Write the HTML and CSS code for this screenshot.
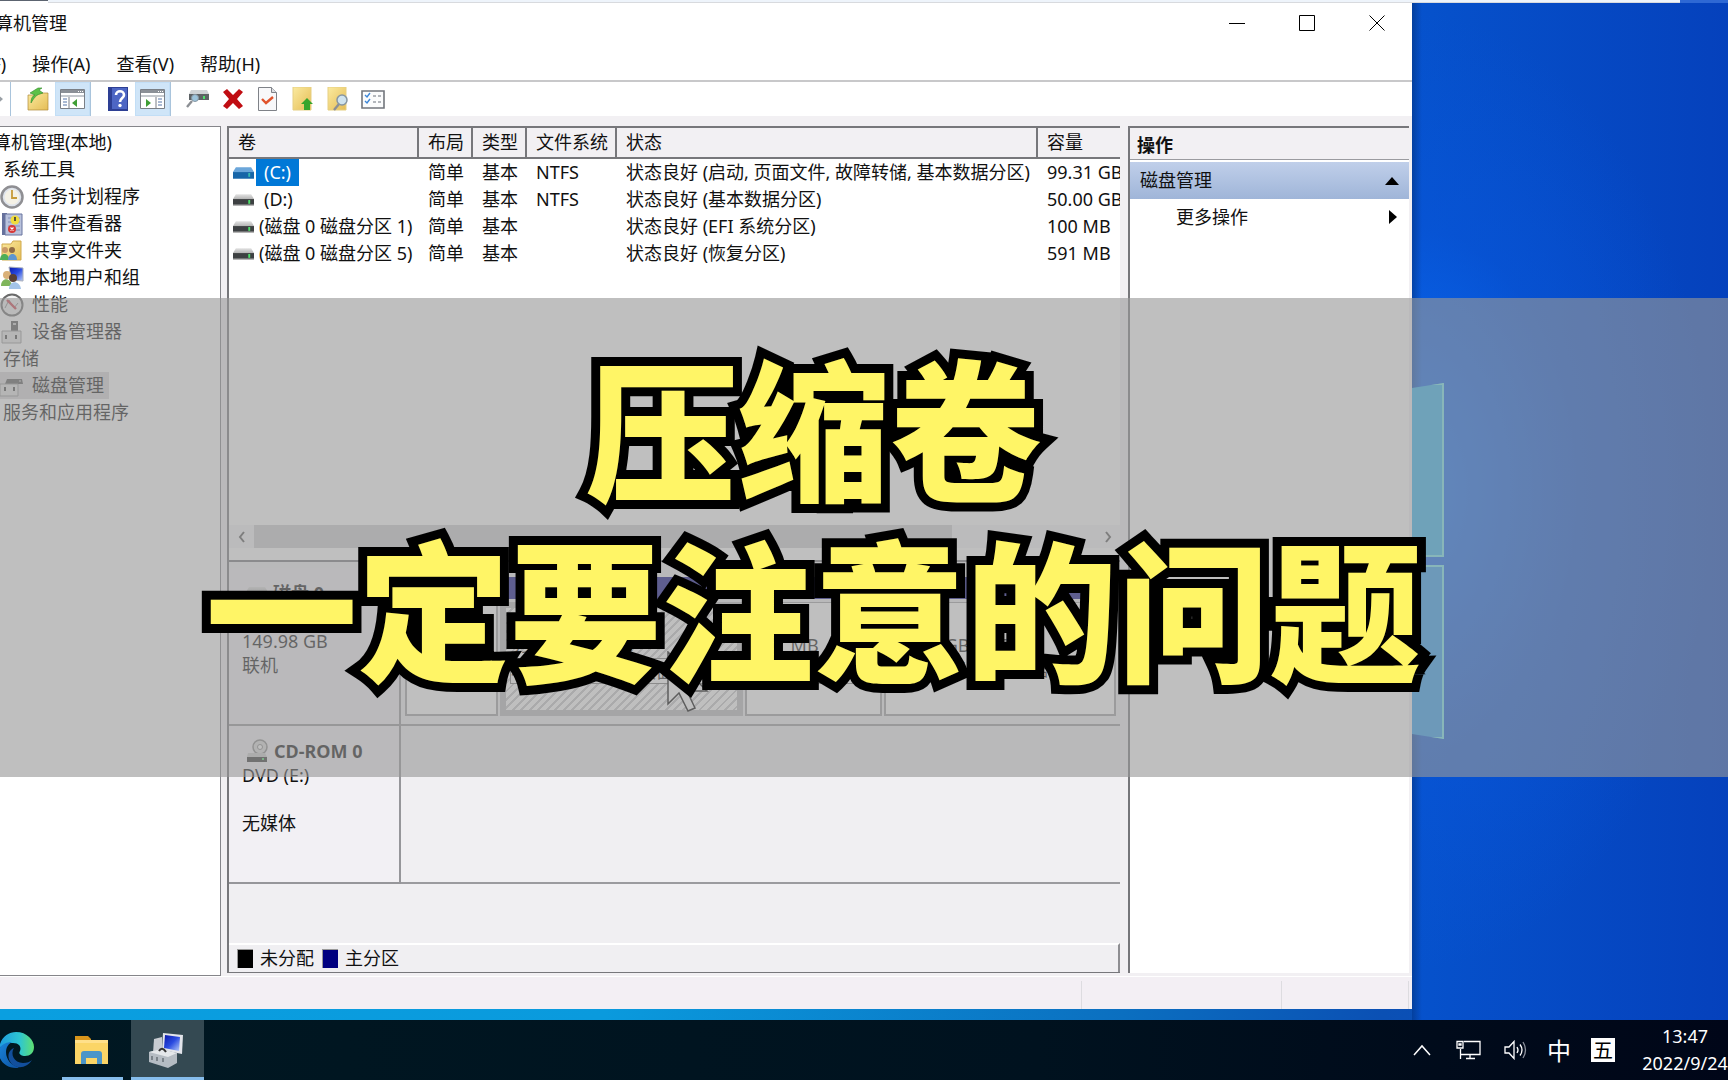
FILE: index.html
```html
<!DOCTYPE html>
<html lang="zh-CN">
<head>
<meta charset="utf-8">
<title>计算机管理</title>
<link rel="stylesheet" href="styles.css">
</head>
<body>
<svg width="0" height="0" class="defs" aria-hidden="true">
  <defs>
    <linearGradient id="gDrive" x1="0" y1="0" x2="0" y2="1"><stop offset="0" stop-color="#e3e3e3"/><stop offset="1" stop-color="#b4b4b4"/></linearGradient>
    <linearGradient id="gFolder" x1="0" y1="0" x2="1" y2="1"><stop offset="0" stop-color="#fbeaa0"/><stop offset="1" stop-color="#e5bd55"/></linearGradient>
    <linearGradient id="gScreen" x1="0" y1="0" x2="1" y2="1"><stop offset="0" stop-color="#0a18a8"/><stop offset=".5" stop-color="#2a4be0"/><stop offset="1" stop-color="#b8cdf8"/></linearGradient>
    <linearGradient id="gEdgeA" x1="0" y1="0" x2="1" y2="0"><stop offset="0" stop-color="#1c9be0"/><stop offset=".6" stop-color="#2fc6d0"/><stop offset="1" stop-color="#5fe070"/></linearGradient>
    <linearGradient id="gEdgeB" x1="0" y1="0" x2="1" y2="1"><stop offset="0" stop-color="#1a86dc"/><stop offset="1" stop-color="#0c4f9e"/></linearGradient>
    <symbol id="drive" viewBox="0 0 22 12"><path d="M3 0h16l3 5H0z" fill="url(#gDrive)"/><path d="M0 5h22v6H0z" fill="#3d4042"/><path d="M0 11h22v1H0z" fill="#9a9a9a"/><path d="M16 6h2v4h-2z" fill="#4ee06a"/></symbol>
    <symbol id="driveSel" viewBox="0 0 22 12"><path d="M3 0h16l3 5H0z" fill="#6ba6da"/><path d="M0 5h22v7H0z" fill="#1765a8"/><path d="M16 6h2v4h-2z" fill="#36b9b0"/></symbol>
  </defs>
</svg>
<div class="top-strip"><span class="strip-dark"></span><span class="strip-light"></span></div>
<div class="desktop">
  <main class="window">
    <header class="titlebar">
      <h1>计算机管理</h1>
      <div class="win-buttons">
        <button type="button" aria-label="最小化"><svg width="16" height="16" viewBox="0 0 16 16"><path d="M0 8.500h16" stroke="#000" fill="none"/></svg></button>
        <button type="button" aria-label="最大化"><svg width="16" height="16" viewBox="0 0 16 16"><path d="M.5.5h15v15H.5z" stroke="#000" fill="none"/></svg></button>
        <button type="button" aria-label="关闭"><svg width="16" height="16" viewBox="0 0 16 16"><path d="M.5.500l15 15M15.500.500l-15 15" stroke="#000" fill="none"/></svg></button>
      </div>
    </header>
    <nav class="menubar">
      <button type="button">文件(F)</button>
      <button type="button">操作(A)</button>
      <button type="button">查看(V)</button>
      <button type="button">帮助(H)</button>
    </nav>
    <div class="toolbar">
      <button type="button" aria-label="后退"><svg width="22" height="22" viewBox="0 0 22 22"><path d="M1 11l8-7v4h11v6H9v4z" fill="#9aa0a6"/></svg></button>
      <button type="button" aria-label="前进"><svg width="22" height="22" viewBox="0 0 22 22"><path d="M21 11l-8-7v4H2v6h11v4z" fill="#9aa0a6"/></svg></button>
      <span class="sep"></span>
      <button type="button" aria-label="上移"><svg width="22" height="24" viewBox="0 0 22 24"><path d="M1 8h7l2-2h11v17H1z" fill="url(#gFolder)" stroke="#b08a3a" stroke-width=".7"/><path d="M4 16c0-4 1-7 4-8L3 6l8-5 4 0-3 2 4 3-3 1c-4 1-6 4-9 9z" fill="#5cc148" stroke="#2f8a28" stroke-width=".6"/></svg></button>
      <button type="button" class="on" aria-label="显示控制台树"><svg width="25" height="20" viewBox="0 0 25 20"><path d="M.5.500h24v19H.5z" fill="#fff" stroke="#7a7f86"/><path d="M1 1h23v3H1z" fill="#8b9097"/><path d="M1 6h23v2H1z" fill="#c5c9ce"/><path d="M18 2h1v1h-1zM20 2h1v1h-1zM22 2h1v1h-1z" fill="#fff"/><path d="M9 8v11" stroke="#7a7f86"/><path d="M3 10h4M3 13h4M3 16h4" stroke="#5574a8"/><path d="M17 10v8l-5-4z" fill="#3f9e35"/></svg></button>
      <span class="sep"></span>
      <button type="button" aria-label="帮助"><svg width="20" height="24" viewBox="0 0 20 24"><path d="M0 0h20v24H0z" fill="#2d3f94"/><path d="M4 1h15v21H4z" fill="#4d66c4"/><path d="M8 8c0-5 8-5 8 0 0 3-4 3-4 7" stroke="#fff" stroke-width="2.600" fill="none"/><circle cx="12" cy="18.500" r="1.700" fill="#fff"/></svg></button>
      <button type="button" class="on" aria-label="显示操作窗格"><svg width="25" height="20" viewBox="0 0 25 20"><path d="M.5.500h24v19H.5z" fill="#fff" stroke="#7a7f86"/><path d="M1 1h23v3H1z" fill="#8b9097"/><path d="M1 6h23v2H1z" fill="#c5c9ce"/><path d="M18 2h1v1h-1zM20 2h1v1h-1zM22 2h1v1h-1z" fill="#fff"/><path d="M16 8v11" stroke="#7a7f86"/><path d="M18 10h4M18 13h4M18 16h4" stroke="#5574a8"/><path d="M6 10v8l5-4z" fill="#3f9e35"/></svg></button>
      <span class="sep"></span>
      <button type="button" aria-label="磁盘"><svg width="24" height="20" viewBox="0 0 24 20"><path d="M5 1h16l2 4H3z" fill="#cfd3d6"/><path d="M3 5h20v6H3z" fill="#5d6265"/><path d="M17 7h2v3h-2z" fill="#4ee06a"/><circle cx="9" cy="9" r="3.500" fill="#9cc4dc" stroke="#8796a2"/><path d="M6 12l-5 6" stroke="#8c8f94" stroke-width="2.400"/></svg></button>
      <button type="button" aria-label="删除"><svg width="22" height="22" viewBox="0 0 22 22"><path d="M1 4l4-3 6 6 6-6 4 3-6 7 6 7-4 3-6-6-6 6-4-3 6-7z" fill="#c00d12"/></svg></button>
      <button type="button" aria-label="属性"><svg width="19" height="24" viewBox="0 0 19 24"><path d="M.5.500h13l5 5v18H.5z" fill="#f8f8fa" stroke="#7f8288"/><path d="M13.500.500v5h5" fill="#dcdee2" stroke="#7f8288"/><path d="M4 12l4 4 7-6" stroke="#e0532c" stroke-width="2.400" fill="none"/></svg></button>
      <button type="button" aria-label="打开"><svg width="22" height="24" viewBox="0 0 22 24"><path d="M1 0h18v23H1z" fill="url(#gFolder)" stroke="#e6cf82"/><path d="M15 11l6 6h-3v6h-6v-6H9z" fill="#35a52c"/></svg></button>
      <button type="button" aria-label="查找"><svg width="22" height="24" viewBox="0 0 22 24"><path d="M1 0h18v23H1z" fill="url(#gFolder)" stroke="#e6cf82"/><path d="M12 17l-5 6" stroke="#8c8f94" stroke-width="2.400"/><circle cx="15" cy="13" r="5" fill="#cfe3ee" stroke="#8796a2" stroke-width="1.500"/></svg></button>
      <button type="button" aria-label="列表"><svg width="24" height="19" viewBox="0 0 24 19"><path d="M1 1h22v17H1z" fill="#fafbfc" stroke="#72767c" stroke-width="1.600"/><path d="M4 5l2 2 3-4M4 11l2 2 3-4" stroke="#3c86d8" stroke-width="1.400" fill="none"/><path d="M12 6h3M17 6h3M12 12h3M17 12h3" stroke="#9aa0a6" stroke-width="1.500"/></svg></button>
    </div>
    <div class="panes">
      <aside class="tree">
        <ul>
          <li class="root">计算机管理(本地)</li>
          <li class="group">系统工具</li>
          <li class="leaf"><svg width="24" height="24" viewBox="0 0 24 24"><circle cx="12" cy="12" r="10.500" fill="#dfe4ec" stroke="#8f8f93" stroke-width="2.500"/><circle cx="12" cy="12" r="7.500" fill="#f4f1e6"/><path d="M12 5v8h5" stroke="#c79b3a" stroke-width="1.800" fill="none"/></svg>任务计划程序</li>
          <li class="leaf"><svg width="24" height="24" viewBox="0 0 24 24"><path d="M2 1h5v22H2z" fill="#66719c"/><path d="M5 2h17v21H5z" fill="#b9c2dc" stroke="#69749f"/><path d="M8 6h12M8 10h12M8 14h12M8 18h12" stroke="#8490b8"/><circle cx="15" cy="8" r="4.500" fill="#f0dc3c"/><path d="M15 5v4" stroke="#333" stroke-width="1.600"/><circle cx="12" cy="17" r="4" fill="#d83838"/><path d="M10.500 15.500l3 3m0-3l-3 3" stroke="#fff" stroke-width="1.200"/></svg>事件查看器</li>
          <li class="leaf"><svg width="24" height="24" viewBox="0 0 24 24"><path d="M2 5h9l2-3h8v19H2z" fill="url(#gFolder)" stroke="#d0a94c"/><circle cx="5" cy="11" r="3" fill="#c99866"/><circle cx="12" cy="11" r="3" fill="#8f6a44"/><path d="M0 21c0-8 9-8 9 0z" fill="#4fae58"/><path d="M8 21c0-8 9-8 9 0z" fill="#5f95d0"/></svg>共享文件夹</li>
          <li class="leaf"><svg width="24" height="24" viewBox="0 0 24 24"><path d="M9 1l14 1v13l-12-1z" fill="url(#gScreen)" stroke="#a8aebb"/><circle cx="7" cy="9" r="4" fill="#d9b078"/><circle cx="13" cy="12" r="4" fill="#5a4034"/><path d="M1 20c0-9 10-9 11 0z" fill="#7fb55c"/><path d="M9 23c0-9 11-9 12 0z" fill="#a4c4e8"/></svg>本地用户和组</li>
          <li class="leaf"><svg width="24" height="24" viewBox="0 0 24 24"><circle cx="12" cy="12" r="10.500" fill="#f2f2f2" stroke="#6a6a6a" stroke-width="2"/><path d="M5 15l4-8 5 8 4-5" stroke="#8a8a8a" fill="none"/><path d="M7 7l9 9" stroke="#d0404c" stroke-width="2.400"/></svg>性能</li>
          <li class="leaf"><svg width="24" height="24" viewBox="0 0 24 24"><path d="M11 1h7v10h-7z" fill="#555"/><path d="M13 3h3v2h-3z" fill="#ccc"/><path d="M2 11h19v12H2z" fill="#e6e6e6" stroke="#999"/><path d="M5 15h2v4H5zM15 15h2v4h-2z" fill="#444"/></svg>设备管理器</li>
          <li class="group">存储</li>
          <li class="leaf selected"><svg width="24" height="24" viewBox="0 0 24 24"><path d="M7 5h15l1 5H5z" fill="#5a5a5a"/><path d="M19 6h2v2h-2z" fill="#9c9c9c"/><path d="M0 10h18v12H0z" fill="#e4e4e4" stroke="#999"/><path d="M4 13h2v4H4zM13 13h2v4h-2z" fill="#444"/></svg>磁盘管理</li>
          <li class="group">服务和应用程序</li>
        </ul>
      </aside>
      <section class="center">
        <div class="volumes">
          <table>
            <colgroup><col class="c-vol"><col class="c-short"><col class="c-short"><col class="c-fs"><col><col class="c-cap"></colgroup>
            <thead><tr><th>卷</th><th>布局</th><th>类型</th><th>文件系统</th><th>状态</th><th>容量</th></tr></thead>
            <tbody>
              <tr><td class="vol"><svg width="21" height="12"><use href="#driveSel"/></svg><span class="letter picked">(C:)</span></td><td>简单</td><td>基本</td><td>NTFS</td><td>状态良好 (启动, 页面文件, 故障转储, 基本数据分区)</td><td>99.31 GB</td></tr>
              <tr><td class="vol"><svg width="21" height="12"><use href="#drive"/></svg><span class="letter">(D:)</span></td><td>简单</td><td>基本</td><td>NTFS</td><td>状态良好 (基本数据分区)</td><td>50.00 GB</td></tr>
              <tr><td class="vol"><svg width="21" height="12"><use href="#drive"/></svg><span>(磁盘 0 磁盘分区 1)</span></td><td>简单</td><td>基本</td><td></td><td>状态良好 (EFI 系统分区)</td><td>100 MB</td></tr>
              <tr><td class="vol"><svg width="21" height="12"><use href="#drive"/></svg><span>(磁盘 0 磁盘分区 5)</span></td><td>简单</td><td>基本</td><td></td><td>状态良好 (恢复分区)</td><td>591 MB</td></tr>
            </tbody>
          </table>
          <div class="scrollbar">
            <button type="button" aria-label="向左滚动"><svg width="8" height="12" viewBox="0 0 8 12"><path d="M6 1L2 6l4 5" stroke="#555" stroke-width="2" fill="none"/></svg></button>
            <div class="track"><div class="thumb"></div></div>
            <button type="button" aria-label="向右滚动"><svg width="8" height="12" viewBox="0 0 8 12"><path d="M2 1l4 5-4 5" stroke="#555" stroke-width="2" fill="none"/></svg></button>
          </div>
        </div>
        <div class="disks">
          <div class="disk">
            <div class="disk-label">
              <div class="disk-name"><svg width="22" height="12"><use href="#drive"/></svg>磁盘 0</div>
              <div>基本</div><div>149.98 GB</div><div>联机</div>
            </div>
            <div class="partitions">
              <div class="part"><div class="bar"></div><div class="box"></div></div>
              <div class="part active"><div class="bar"></div><div class="box"><b>(C:)</b><span>99.31 GB NTFS</span><span class="tip">状态良好 (启动, 页面文件, 故障转储, 基本数据分区)</span></div></div>
              <div class="part"><div class="bar"></div><div class="box"><b></b><span>591 MB</span></div></div>
              <div class="part"><div class="bar"></div><div class="box"><b>(D:)</b><span>50.00 GB NTFS</span><span>状态良好 (基本数据分区)</span></div></div>
              <svg class="cursor" width="42" height="62" viewBox="-1 -1 42 62"><path d="M0 0v52l11-11 9 18 7-3-8-17h20z" fill="#fff" stroke="#000" stroke-width="1.500"/></svg>
            </div>
          </div>
          <div class="disk">
            <div class="disk-label">
              <div class="disk-name"><svg width="23" height="24" viewBox="0 0 23 24"><circle cx="14" cy="8" r="7" fill="#ddd" stroke="#888" stroke-width="1.500"/><circle cx="14" cy="8" r="2.500" fill="#fff" stroke="#888"/><path d="M2 14h17l2 4H1z" fill="#ccc"/><path d="M1 18h20v5H1z" fill="#333"/><path d="M16 19h2v2h-2z" fill="#4ee06a"/></svg>CD-ROM 0</div>
              <div>DVD (E:)</div><div>&nbsp;</div><div>无媒体</div>
            </div>
            <div class="partitions"></div>
          </div>
          <div class="spacer"></div>
          <div class="legend"><i class="black"></i>未分配<i class="navy"></i>主分区</div>
        </div>
      </section>
      <aside class="actions">
        <h2>操作</h2>
        <button type="button" class="act-group">磁盘管理<svg width="14" height="8" viewBox="0 0 14 8"><path d="M7 0l7 8H0z"/></svg></button>
        <button type="button" class="act-item">更多操作<svg width="8" height="14" viewBox="0 0 8 14"><path d="M0 0l8 7-8 7z"/></svg></button>
      </aside>
    </div>
    <footer class="statusbar"><span></span><span></span><span></span></footer>
  </main>
  <div class="wallpaper"><div class="pane upper"></div><div class="pane lower"></div></div>
</div>
<div class="taskbar">
  <button type="button" class="task edge" aria-label="Edge"><svg width="36" height="36" viewBox="0 0 36 36"><path d="M1 17C2 6 10 0 18 0c11 0 18 8 18 15 0 6-4 9-9 9-4 0-7-2-5-5 1-2 1-8-7-8-7 0-12 3-14 6z" fill="url(#gEdgeA)"/><path d="M1 17c2-4 7-7 13-7-4 2-6 6-6 10 0 8 6 14 13 15-1 1-2 1-3 1C7 36-1 27 1 17z" fill="url(#gEdgeB)"/><path d="M16 16c-4 6 0 15 9 15 4 0 7-1 9-3-3 5-9 8-14 7C11 34 6 20 16 16z" fill="#124f9c"/></svg></button>
  <button type="button" class="task running" aria-label="文件资源管理器"><svg width="33" height="29" viewBox="0 0 33 29"><path d="M0 0h13l3 3h0v6H0z" fill="#d9961c"/><path d="M0 4h33v24H0z" fill="#fbd566"/><path d="M0 4h33v3H0z" fill="#ffe08a"/><path d="M6 28V18q0-3 3-3h15q3 0 3 3v10h-5v-6H11v6z" fill="#4a95c8"/></svg></button>
  <button type="button" class="task current" aria-label="计算机管理"><svg width="34" height="35" viewBox="0 0 34 35"><path d="M5 6l8-2v16H4z" fill="#c8ccd2"/><path d="M14 0l20 2-1 19-20-4z" fill="#e2e4ea"/><path d="M16 2l15 2-1 14-15-3z" fill="url(#gScreen)"/><path d="M0 19l12-3 16 4v10l-9 5-19-6z" fill="#b5bcc3"/><path d="M0 19l12-3 16 4-9 4z" fill="#e4e7ea"/><path d="M3 23v4M8 24v4M14 25v4" stroke="#6d757c" stroke-width="1.600"/><path d="M10 18q3-5 7 1" stroke="#333" stroke-width="2" fill="none"/></svg></button>
  <div class="tray">
    <button type="button" aria-label="显示隐藏的图标"><svg width="18" height="12" viewBox="0 0 18 12"><path d="M1 11l8-9 8 9" stroke="#fff" stroke-width="1.500" fill="none"/></svg></button>
    <button type="button" aria-label="网络"><svg width="25" height="20" viewBox="0 0 25 20"><path d="M8 1.500h16v13H4.500M4.500 9v10M1 1.500h6V8H1zM3 4h2v1H3zM14 15v3M10 18.500h9" stroke="#fff" stroke-width="1.300" fill="none"/></svg></button>
    <button type="button" aria-label="音量"><svg width="23" height="20" viewBox="0 0 23 20"><path d="M1 7h4l5-5.500v17L5 13H1z" stroke="#fff" stroke-width="1.300" fill="none"/><path d="M13 7q2 3 0 6M16 4.500q4 5.500 0 11" stroke="#fff" stroke-width="1.300" fill="none"/><path d="M19 2q5 8 0 16" stroke="#8a8f9a" stroke-width="1.300" fill="none"/></svg></button>
    <button type="button" class="ime">中</button>
    <button type="button" class="wubi">五</button>
    <button type="button" class="clock"><span>13:47</span><span>2022/9/24</span></button>
  </div>
</div>
<div class="banner"><p>压缩卷<br>一定要注意的问题</p></div>
</body>
</html>
```
FILE: styles.css
```css
* { box-sizing: border-box; }

body {
  margin: 0;
  position: relative;
  min-height: 100vh;
  display: flex;
  flex-direction: column;
  overflow: hidden;
  background: linear-gradient(90deg, #0a9fe0 0, #0a9add 35%, #0b6fc0 65%, #0b50b4 80%, #0a46c4 100%);
  font: 18px/27px "Noto Sans", "Noto Sans CJK SC", sans-serif;
  color: #111;
}

.defs { position: absolute; }

button {
  margin: 0;
  padding: 0;
  border: 0;
  background: none;
  font: inherit;
  color: inherit;
  display: flex;
  align-items: center;
  justify-content: center;
}

svg { display: block; flex: none; }

.top-strip { display: flex; height: 3px; background: #2e68d4; }
.strip-dark { width: 48px; background: #5c6470; border-bottom: 2px solid #fff; }
.strip-light { flex: 1; margin-right: 48px; background: #eef4fb; border-bottom: 1px solid #d8dade; }

.desktop { flex: 1; display: flex; }

/* The window hangs 60px over the left edge of the desktop. */
.window {
  flex: 1;
  min-width: 0;
  margin: 0 0 11px -60px;
  display: flex;
  flex-direction: column;
  background: #fff;
}

.titlebar { display: flex; align-items: center; justify-content: space-between; height: 40px; padding-left: 37px; }
.titlebar h1 { margin: 0; font-size: 18px; font-weight: 400; line-height: 27px; }
.win-buttons { display: flex; }
.win-buttons button { width: 70px; height: 40px; }

.menubar { display: flex; gap: 26px; height: 39px; padding: 5px 0 0 10px; border-bottom: 2px solid #c8c8ca; }

.toolbar { display: flex; height: 34px; align-items: stretch; }
.toolbar button { width: 35px; }
.toolbar .on { background: #cfe5f8; border: 1px solid #c2def6; }
.sep { width: 10px; border-left: 1px solid #a9c4dc; }

.panes {
  flex: 1;
  display: grid;
  grid-template-columns: 281px minmax(0, 1fr) 281px;
  column-gap: 6px;
  padding: 10px 3px 0 0;
  background: #f2f0f3;
}

.tree { background: #fff; border: solid #85858a; border-width: 1px 1px 1px 0; padding-top: 2px; }
.tree ul { list-style: none; margin: 0; padding: 0; }
.tree li { height: 27px; display: flex; align-items: center; width: max-content; }
.root { padding-left: 35px; }
.group { padding-left: 63px; }
.leaf { padding-left: 60px; padding-right: 5px; gap: 8px; }
.leaf.selected { background: #d9d8da; }

.center {
  display: flex;
  flex-direction: column;
  margin: 0 2px 3px 0;
  border: solid #77777b;
  border-width: 2px 0 1px 2px;
  overflow: hidden;
}

.volumes { flex: 1; display: flex; flex-direction: column; justify-content: space-between; background: #fff; }
.volumes table { width: 100%; table-layout: fixed; border-collapse: separate; border-spacing: 0; white-space: nowrap; }
.c-vol { width: 190px; }
.c-short { width: 54px; }
.c-fs { width: 90px; }
.c-cap { width: 82px; }
.volumes th {
  height: 31px;
  padding: 0 0 0 9px;
  text-align: left;
  font-weight: 400;
  background: #f2f0f3;
  border: solid #77777b;
  border-width: 0 2px 2px 0;
}
.volumes th:last-child { border-right: 0; }
.volumes td { height: 27px; padding: 0 0 0 9px; overflow: hidden; }
.volumes td.vol { display: flex; align-items: center; gap: 5px; padding-left: 4px; }
.letter { padding: 0 8px; margin-left: -3px; }
.picked { background: #0078d7; color: #fff; }

.scrollbar { display: flex; height: 23px; margin-bottom: 12px; background: #f5f5f7; }
.scrollbar button { width: 25px; }
.track { flex: 1; }
.thumb { width: 83%; height: 100%; background: #cdcdd0; }

.disks { background: #f0eff2; border-top: 2px solid #77777b; padding-top: 6px; }
.disk { display: grid; grid-template-columns: 172px minmax(0, 1fr); height: 158px; line-height: 24px; }
.disk-label {
  padding: 13px 0 0 13px;
  border: solid #96969a;
  border-width: 0 2px 2px 0;
  background: #f2f0f4;
  white-space: nowrap;
}
.disk-name { display: flex; align-items: center; gap: 5px; height: 24px; padding-left: 4px; font-weight: 700; }

.partitions {
  position: relative;
  display: grid;
  grid-template-columns: 93px 243px 137px minmax(0, 1fr);
  column-gap: 2px;
  padding: 9px 4px 8px 4px;
  border-bottom: 2px solid #9b9b9f;
}
.part { min-width: 0; display: flex; flex-direction: column; }
.bar { height: 22px; background: #000080; }
.box {
  flex: 1;
  margin-top: 3px;
  padding: 6px 0 0 8px;
  display: flex;
  flex-direction: column;
  white-space: nowrap;
  background: #fff;
  border: solid #a0a0a4;
  border-width: 1px 2px 2px 2px;
}
.box b { height: 24px; }
.active .box {
  padding: 2px 0 0 4px;
  border: 6px solid #bcbcbe;
  background: repeating-linear-gradient(135deg, #fff 0 4px, #c8c8ca 4px 6px);
}
.box > .tip {
  position: relative;
  z-index: 1;
  width: max-content;
  border: 1px solid #777;
  background: #fff;
}
.cursor { position: absolute; left: 266px; top: 83px; z-index: 2; }

.spacer { height: 59px; }
.legend { display: flex; align-items: center; height: 29px; padding-left: 8px; border: solid; border-width: 2px 2px 0 0; border-color: #fff #8e8e92; }
.legend i { width: 16px; height: 19px; margin-right: 7px; border: 1px solid #999; border-width: 1px 0 0 1px; }
.legend .black { background: #000; }
.legend .navy { background: #000080; margin-left: 8px; }

.actions { margin-bottom: 3px; background: #fff; border: solid #77777b; border-width: 2px 0 0 2px; }
.actions h2 { margin: 0 0 2px; height: 32px; padding: 4px 0 0 7px; font-size: 18px; font-weight: 700; line-height: 27px; background: #f2f0f3; border-bottom: 1px solid #9b9b9f; }
.actions button { width: 100%; justify-content: space-between; }
.act-group { height: 37px; padding: 0 10px 0 10px; background: linear-gradient(#c0cfea, #9fb5d8); }
.act-item { height: 36px; padding: 0 12px 0 46px; }

.statusbar { display: flex; justify-content: flex-end; height: 33px; padding-right: 3px; background: #f3eff4; border-top: 1px solid #fff; }
.statusbar span { border-left: 1px solid #dddce0; width: 127px; margin-top: 4px; }
.statusbar span:first-child { width: 200px; }
.statusbar span:last-child { width: 1px; }

.wallpaper {
  width: 316px;
  padding-top: 380px;
  display: flex;
  flex-direction: column;
  gap: 8px;
  background:
    linear-gradient(90deg, rgba(0, 40, 100, .45), rgba(0, 40, 100, 0) 10px),
    radial-gradient(ellipse 300px 480px at 0 48%, #0a6cf8, rgba(8, 86, 220, .5) 55%, rgba(5, 75, 200, 0) 100%),
    linear-gradient(90deg, #0652cc, #0541bc);
}
.pane { width: 32px; height: 174px; border: solid #70e8f0; border-width: 2px 2px 2px 0; background: #2eb4f0; }
.pane.upper { clip-path: polygon(0 5px, 100% 0, 100% 100%, 0 100%); }
.pane.lower { background: #289cf0; clip-path: polygon(0 0, 100% 0, 100% 100%, 0 calc(100% - 5px)); }

.taskbar { display: flex; height: 60px; background: linear-gradient(90deg, #001822, #00121f 60%, #000618); color: #fff; }
.task { border-bottom: 3px solid transparent; padding-top: 3px; }
.edge { width: 62px; padding-right: 30px; }
.running { width: 61px; margin-right: 8px; border-color: #86bdec; padding-right: 2px; }
.current { width: 73px; border-color: #86bdec; background: #344952; padding-right: 3px; }
.tray { margin-left: auto; display: flex; align-items: center; }
.tray button { width: 47px; height: 60px; }
.tray .ime { width: 40px; font-size: 24px; }
.tray .wubi { width: 24px; height: 24px; margin: 0 27px 0 12px; background: #fff; color: #000; font-size: 20px; }
.tray .clock { width: 86px; flex-direction: column; white-space: nowrap; }

.banner {
  position: absolute;
  z-index: 5;
  inset: 298px 0 auto;
  height: 479px;
  display: flex;
  justify-content: center;
  padding: 36px 101px 0 0;
  background: rgba(152, 152, 152, .62);
}
.banner p {
  margin: 0;
  text-align: center;
  white-space: nowrap;
  font: 900 152px/181px "Noto Sans CJK SC", sans-serif;
  color: #fff566;
  -webkit-text-stroke: 18px #000;
  paint-order: stroke fill;
}
```
